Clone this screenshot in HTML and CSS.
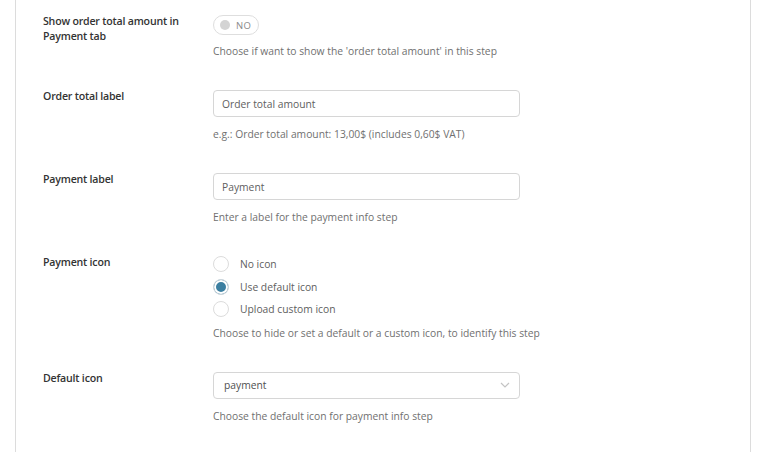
FILE: index.html
```html
<!DOCTYPE html>
<html lang="en">
<head>
  <meta charset="UTF-8" />
  <title>Payment step settings</title>
  <link rel="stylesheet" href="styles.css">
</head>
<body>

<div class="panel">

  <div class="row">
    <div class="label">Show order total amount in Payment tab</div>
    <div class="field">
      <div class="toggle"><span class="knob"></span><span class="toggle-text">NO</span></div>
      <div class="desc desc-toggle">Choose if want to show the 'order total amount' in this step</div>
    </div>
  </div>

  <div class="row">
    <div class="label">Order total label</div>
    <div class="field">
      <input class="text" type="text" value="Order total amount">
      <div class="desc">e.g.: Order total amount: 13,00$ (includes 0,60$ VAT)</div>
    </div>
  </div>

  <div class="row">
    <div class="label">Payment label</div>
    <div class="field">
      <input class="text" type="text" value="Payment">
      <div class="desc">Enter a label for the payment info step</div>
    </div>
  </div>

  <div class="row">
    <div class="label">Payment icon</div>
    <div class="field">
      <div class="radios">
        <label class="radio"><span class="dot"></span>No icon</label>
        <label class="radio"><span class="dot checked"></span>Use default icon</label>
        <label class="radio"><span class="dot"></span>Upload custom icon</label>
      </div>
      <div class="desc desc-radios">Choose to hide or set a default or a custom icon, to identify this step</div>
    </div>
  </div>

  <div class="row">
    <div class="label">Default icon</div>
    <div class="field">
      <div class="select">
        <span>payment</span>
        <svg width="10" height="6" viewBox="0 0 10 6"><path d="M1 1l4 4 4-4" fill="none" stroke="#c4c4c4" stroke-width="1.2"/></svg>
      </div>
      <div class="desc">Choose the default icon for payment info step</div>
    </div>
  </div>

</div>

</body>
</html>
```

FILE: styles.css
```css
* { margin: 0; padding: 0; box-sizing: border-box; }

body {
  font-family: 'Open Sans', 'Noto Sans', sans-serif;
  background: #fff;
  color: #666;
  height: 452px;
  overflow: hidden;
}

.panel {
  margin: 0 18px 0 15px;
  height: 452px;
  border-left: 1px solid #dcdcdc;
  border-right: 1px solid #dcdcdc;
  padding: 15px 0 0 27px;
}

.row {
  display: grid;
  grid-template-columns: 170px 307px;
  padding-bottom: 30px;
}

.label {
  font-size: 10.6px;
  font-weight: 600;
  letter-spacing: -0.2px;
  line-height: 14.5px;
  color: #333;
  padding-right: 20px;
  margin-top: -1px;
}

.desc {
  font-size: 10.3px;
  line-height: 18px;
  color: #707070;
  margin-top: 8px;
  white-space: nowrap;
}

.desc-toggle { margin-top: 7px; }
.desc-radios { margin-top: 3px; }

.toggle {
  width: 46px;
  height: 20px;
  border: 1px solid #dedede;
  border-radius: 10px;
  display: flex;
  align-items: center;
  padding-left: 6px;
}

.knob {
  width: 10px;
  height: 10px;
  border-radius: 50%;
  background: #d4d4d4;
}

.toggle-text {
  font-size: 9.5px;
  color: #8a8a8a;
  margin-left: 6px;
  letter-spacing: 0.3px;
}

.text, .select {
  display: flex;
  align-items: center;
  width: 307px;
  height: 27px;
  border: 1px solid #d6d6d6;
  border-radius: 4px;
  padding: 0 8px;
  font-family: inherit;
  font-size: 10.3px;
  color: #606060;
  background: #fff;
  outline: none;
}

.select {
  justify-content: space-between;
  padding: 0 9px 0 10px;
  color: #505050;
}

.radios {
  margin-top: -3px;
}

.radio {
  display: flex;
  align-items: center;
  height: 22.5px;
  font-size: 10.3px;
  color: #606060;
}

.dot {
  width: 16px;
  height: 16px;
  border: 1px solid #dcdcdc;
  border-radius: 50%;
  margin-right: 11px;
  background: #fff;
}

.dot.checked {
  background: #3b7fa1;
  box-shadow: inset 0 0 0 2px #fff;
  border-color: #d0d8dd;
}
```
